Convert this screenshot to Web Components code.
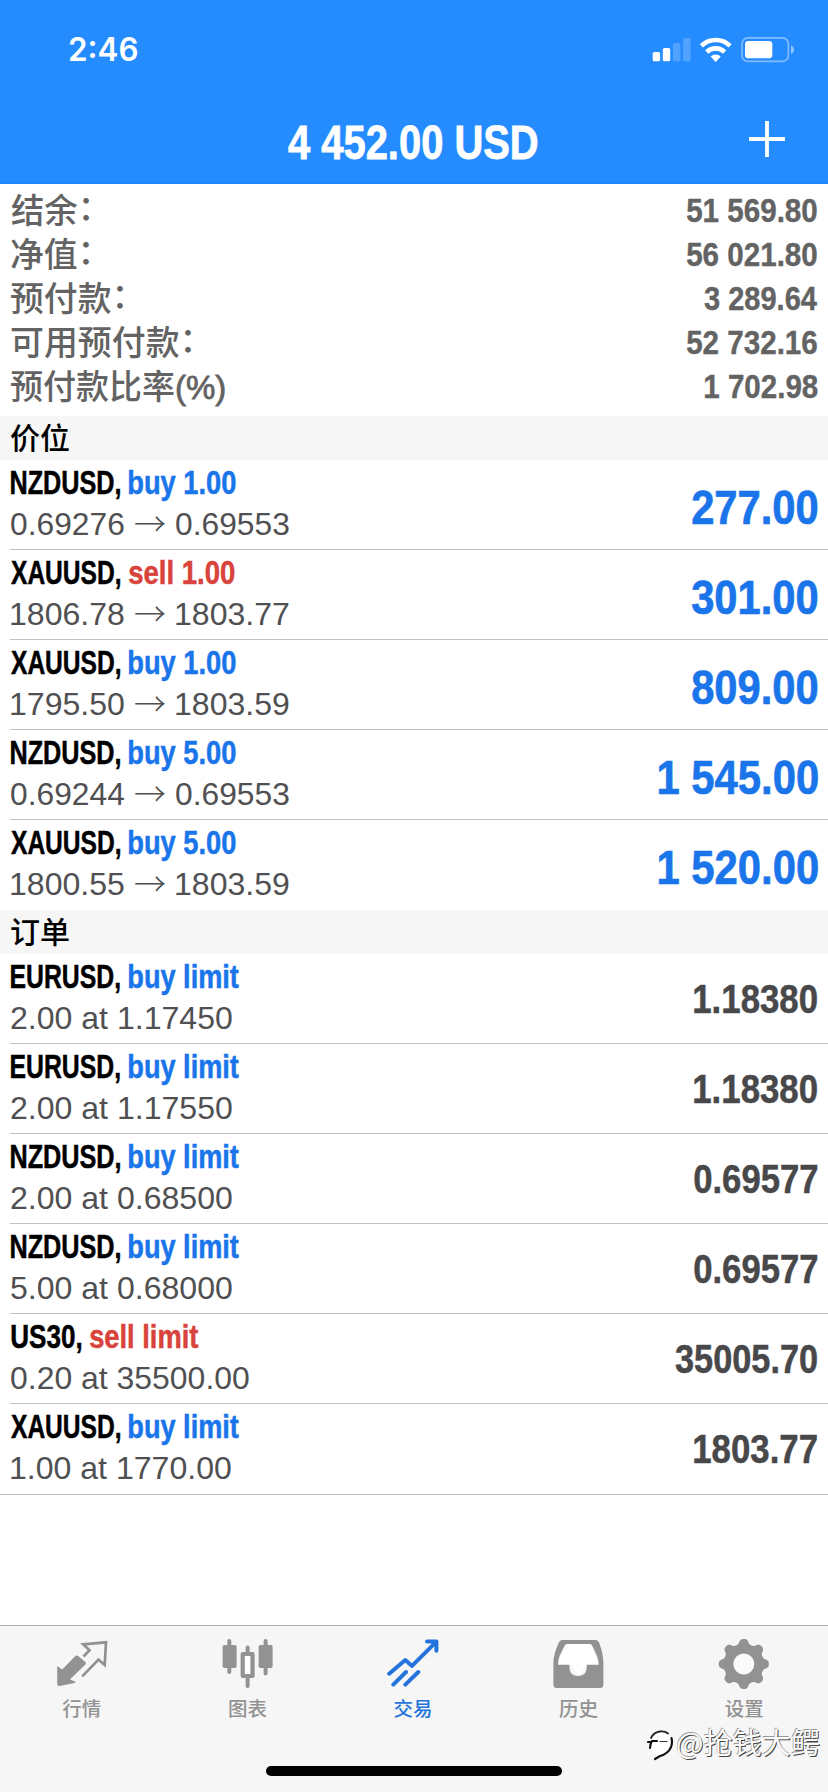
<!DOCTYPE html>
<html lang="zh-CN">
<head>
<meta charset="utf-8">
<title>交易</title>
<style>
html,body{margin:0;padding:0;background:#fff}
body{font-family:"Liberation Sans","Noto Sans CJK SC",sans-serif;color:#000}
</style>
</head>
<body>
<trade-app></trade-app>
<script>
const ctx = document.createElement('canvas').getContext('2d');

class Base extends HTMLElement {
  constructor() { super(); this.attachShadow({mode: 'open'}); }
  a(n) { return this.getAttribute(n) || ''; }
  connectedCallback() { this.shadowRoot.innerHTML = this.render(); this.ready(); }
  ready() {}
}

/* Condensed text: scales its glyphs horizontally so that their ink is exactly `w` pixels wide. */
customElements.define('fit-text', class extends Base {
  render() {
    const t = this.a('t').replace('：', '<i>：</i>').replace('(%)', '<b>(%)</b>');
    return `<style>:host{display:block;flex:none;white-space:pre}
      span{display:inline-block;transform-origin:0 50%}
      i{font-style:normal;line-height:0;vertical-align:3.5px}
      b{font-weight:inherit;-webkit-text-stroke:.8px}</style><span>${t}</span>`;
  }
  ready() {
    const cs = getComputedStyle(this), s = this.shadowRoot.querySelector('span'), w = +this.a('w');
    ctx.font = `${cs.fontWeight} ${cs.fontSize} ${cs.fontFamily}`;
    const m = ctx.measureText(this.a('t'));
    const l = m.actualBoundingBoxLeft, k = w / (l + m.actualBoundingBoxRight);
    this.style.width = w + 'px';
    s.style.transform = `translateX(${l * k}px) scaleX(${k})`;
  }
});

customElements.define('status-bar', class extends Base {
  render() {
    return `<style>
      :host{display:flex;align-items:flex-start;justify-content:space-between;height:64px;padding:34px 34px 0 69px;color:#fff}
      fit-text{font:600 32px/32px Inter,sans-serif}
      svg{display:block;margin-top:2px}</style>
      <fit-text t="2:46" w="68"></fit-text>
      <svg width="142" height="28" viewBox="652 36 142 28" fill="#fff">
        <rect x="652.7" y="52" width="7.4" height="9.3" rx="1.6"/><rect x="662.8" y="48" width="7.4" height="13.3" rx="1.6"/>
        <g opacity=".2"><rect x="673" y="43" width="7.4" height="18.3" rx="1.6"/><rect x="683.1" y="38" width="7.4" height="23.3" rx="1.6"/></g>
        <g fill="none" stroke="#fff" stroke-width="4.6"><path d="M701.3 45.8a20.8 20.8 0 0 1 28.8 0"/><path d="M706.7 52a13 13 0 0 1 18 0"/></g>
        <path d="M710.6 56.6a7.4 7.4 0 0 1 10.2 0l-5.1 5.3z"/>
        <rect x="742" y="37.8" width="46.4" height="23.6" rx="6" fill="none" stroke="#fff" stroke-width="1.7" opacity=".42"/>
        <rect x="745" y="41" width="27.3" height="17.3" rx="3.4"/>
        <path d="M791 45.5q3.2 1.2 3.2 4.2t-3.2 4.2z" opacity=".48"/>
      </svg>`;
  }
});

customElements.define('nav-bar', class extends Base {
  render() {
    return `<style>
      :host{display:grid;grid-template-columns:1fr auto 1fr;align-items:center;height:90px;padding:0 43px 0 40px;color:#fff;font-weight:700;font-size:48.5px;line-height:54px}
      fit-text{-webkit-text-stroke:.8px;margin-top:3px}
      svg{justify-self:end;margin-top:-2px}</style>
      <i></i><fit-text t="4 452.00 USD" w="249"></fit-text>
      <svg width="36" height="36" viewBox="0 0 36 36" stroke="#fff" stroke-width="3.8"><path d="M18 0v36M0 18h36"/></svg>`;
  }
});

customElements.define('summary-row', class extends Base {
  render() {
    return `<style>
      :host{display:flex;justify-content:space-between;align-items:center;height:44px;padding:0 11px;color:#636363}
      .l{font-weight:500;font-size:34px;line-height:40px;white-space:nowrap;margin-top:1px}
      .v{font-weight:700;font-size:34px;line-height:40px;-webkit-text-stroke:.4px}</style>
      <fit-text class="l" t="${this.a('label')}" w="${this.a('lw')}"></fit-text>
      <fit-text class="v" t="${this.a('value')}" w="${this.a('vw')}"></fit-text>`;
  }
});

customElements.define('section-head', class extends Base {
  render() {
    return `<style>:host{display:block;height:44px;padding-left:10px;background:#f6f6f6;color:#000;font:500 30px/41px "Noto Sans CJK SC",sans-serif}</style><slot></slot>`;
  }
});

customElements.define('deal-row', class extends Base {
  render() {
    const order = this.hasAttribute('order');
    const [a, b] = this.a('detail').split('|');
    const detail = b
      ? `<fit-text t="${a}" w="113"></fit-text><b>→</b><fit-text t="${b}" w="113"></fit-text>`
      : `<fit-text t="${a}" w="${this.a('dw')}"></fit-text>`;
    return `<style>
      :host{display:flex;flex-direction:column;height:90px;--side:#1a75ea}
      :host([last]){height:91px}
      :host([sell]){--side:#d8433b}
      .row{flex:1;display:flex;justify-content:space-between;align-items:center;padding:0 11px}
      .txt{margin-top:-2px}
      .top{display:flex;gap:9px;font-weight:700;font-size:32.5px;line-height:41px;color:#000;-webkit-text-stroke:.5px}
      .side{color:var(--side)}
      .det{display:flex;font-size:32px;line-height:41px;color:#505052}
      .det b{width:52px;text-align:center;font:300 32px/37px "Noto Sans CJK SC",sans-serif}
      .v{font-weight:700;font-size:48.5px;line-height:54px;color:#1a75ea;margin-top:4px;-webkit-text-stroke:.7px}
      .v.o{font-size:40px;color:#48484a;margin-top:0;-webkit-text-stroke:.5px}
      hr{flex:none;height:1px;margin:0 0 0 10px;border:0;background:#c2c2c4}
      :host([end]) hr{background:transparent}
      :host([last]) hr{margin:0}</style>
      <div class="row"><div class="txt">
        <div class="top"><fit-text t="${this.a('sym')}," w="${this.a('sw')}"></fit-text><fit-text class="side" t="${this.a('side')}" w="${this.a('tw')}"></fit-text></div>
        <div class="det">${detail}</div></div>
        <fit-text class="v ${order ? 'o' : ''}" t="${this.a('value')}" w="${this.a('vw')}"></fit-text></div><hr>`;
  }
});

function gearPath(cx, cy) {
  let d = '';
  for (let i = 0; i < 240; i++) {
    const t = i / 240 * Math.PI * 2, r = 22.6 + 2.5 * Math.tanh(1.5 * Math.cos(8 * t)) / Math.tanh(1.5);
    d += (i ? 'L' : 'M') + (cx + r * Math.cos(t)).toFixed(2) + ' ' + (cy + r * Math.sin(t)).toFixed(2);
  }
  return d + 'Z';
}
const ICONS = {
  quotes: `<path fill="currentColor" d="M1.2 30l5 3.4L19.4 20q1.4-1.2 2.8 0l7.2 6q1 1.2 0 2.4L14 43.5l5.2 2.1q.8.9-.6 1.3L3.6 50q-2.4.2-2.4-2z"/>
    <path fill="none" stroke="currentColor" stroke-width="2.7" d="M26.2 40.4L42.5 23.5l6.2 5.4 1.3-22.6-22.8 2 6.3 6-6 6.2"/>`,
  charts: `<g stroke="currentColor" stroke-width="4" stroke-linecap="round"><path d="M8.3 5v31M44.6 5v32.5M26.6 11.5V18M26.6 41v9"/></g>
    <rect x="1.6" y="9" width="14" height="23" rx="1.8" fill="currentColor"/><rect x="37.6" y="9" width="14" height="23" rx="1.8" fill="currentColor"/>
    <rect x="21.7" y="18" width="9.8" height="22" fill="#fff" stroke="currentColor" stroke-width="4.2" stroke-linejoin="round"/>`,
  trade: `<path fill="none" stroke="currentColor" stroke-width="4" stroke-linecap="round" stroke-linejoin="round" d="M2.2 37.7L18.3 24l6.7 5.9L49.4 5.6M40 5.6h9.4v9.2M19 36L6.3 48.6M31.3 36L18.3 48.6"/>`,
  history: `<path fill="#fff" d="M13 7h25l8 22H34l-8 11-9-11H5z"/><path fill="currentColor" fill-rule="evenodd" d="M9.5 4h33q3.2 0 4.3 4.5Q50.4 19 50.4 27v21.5q0 3.5-3.5 3.5h-43Q.4 52 .4 48.500V27Q.4 19 5 8.500 6.300 4 9.500 4zM14 8q-2 0-2.800 2.500L6.500 20q-1.500 4-1.500 8.700h11.400V32q.6 8 8.600 8t8.700-8v-3.300h12q0-4.700-1.700-8.700L39.600 10.500Q39 8 37 8z"/>`,
  settings: `<circle cx="25.8" cy="28" r="12" fill="#fafafa"/><path fill="currentColor" fill-rule="evenodd" d="${gearPath(25.8, 28)}M36.3 28a10.500 10.500 0 1 0-21 0 10.500 10.500 0 1 0 21 0z"/>`
};
customElements.define('tab-item', class extends Base {
  render() {
    return `<style>
      :host{flex:1;display:flex;flex-direction:column;align-items:center;padding-top:10px;color:#929292}
      :host([active]){color:#2474dc}
      svg{display:block}
      span{font:500 19.5px/28px "Noto Sans CJK SC",sans-serif;margin:4px 0 0 -2px}</style>
      <svg width="54" height="54" viewBox="0 0 54 54">${ICONS[this.a('icon')]}</svg><span><slot></slot></span>`;
  }
});

customElements.define('tab-bar', class extends Base {
  render() {
    return `<style>
      :host{display:flex;flex-direction:column;justify-content:space-between;align-items:center;height:167px;box-sizing:border-box;border-top:1px solid #b0b0b0;background:#f6f6f6}
      nav{display:flex;width:100%}
      i{width:296px;height:10px;border-radius:5px;background:#000;margin-bottom:16px}</style>
      <nav><slot></slot></nav><i></i>`;
  }
});

customElements.define('water-mark', class extends Base {
  render() {
    return `<style>
      :host{position:absolute;left:646px;top:1723px;display:flex;align-items:center;height:36px;gap:3px;color:#fcfcfc}
      fit-text{font:400 29px/36px "Noto Sans CJK SC",sans-serif;text-shadow:1px 1px 0 #444,-.6px -.6px 0 #999}
      svg{display:block;margin-top:6px}</style>
      <svg width="28" height="34" viewBox="0 0 28 34" fill="none" stroke-linecap="round">
        <circle cx="14" cy="16" r="12" fill="#fff"/>
        <path stroke="#222" stroke-width="1.8" d="M5 11Q8 5 14 4.500q5-.5 8 2"/><path stroke="#111" stroke-width="2.200" d="M4 21q0-4 2-7h5M2 15h3M25.500 11q2 9-4.500 14.500-3 2.500-7 3.500l-5 3"/><path stroke="#333" stroke-width="1.2" d="M14 14.500h7"/>
      </svg>
      <fit-text t="@抢钱大鳄" w="142"></fit-text>`;
  }
});

customElements.define('trade-app', class extends Base {
  render() {
    const sum = [['结余：', 78.5, '51 569.80', 130], ['净值：', 78.5, '56 021.80', 130], ['预付款：', 112.5, '3 289.64', 113], ['可用预付款：', 180.5, '52 732.16', 130], ['预付款比率(%)', 214, '1 702.98', 112.5]]
      .map(([l, lw, v, vw]) => `<summary-row label="${l}" lw="${lw}" value="${v}" vw="${vw}"></summary-row>`).join('');
    const pos = [['NZDUSD', 109, 'buy 1.00', 106.5, '0.69276|0.69553', '277.00', 125], ['XAUUSD', 109, 'sell 1.00', 105.5, '1806.78|1803.77', '301.00', 125],
      ['XAUUSD', 109, 'buy 1.00', 106.5, '1795.50|1803.59', '809.00', 125], ['NZDUSD', 109, 'buy 5.00', 106.5, '0.69244|0.69553', '1 545.00', 158.5],
      ['XAUUSD', 109, 'buy 5.00', 106.5, '1800.55|1803.59', '1 520.00', 158.5]]
      .map(([s, sw, d, tw, t, v, vw], i) => `<deal-row sym="${s}" sw="${sw}" side="${d}" tw="${tw}" detail="${t}" value="${v}" vw="${vw}" ${d[0] === 's' ? 'sell' : ''} ${i === 4 ? 'end' : ''}></deal-row>`).join('');
    const ord = [['EURUSD', 108.5, 'buy limit', 110, '2.00 at 1.17450', 221, '1.18380', 123], ['EURUSD', 108.5, 'buy limit', 110, '2.00 at 1.17550', 221, '1.18380', 123],
      ['NZDUSD', 109, 'buy limit', 110, '2.00 at 0.68500', 221, '0.69577', 123.5], ['NZDUSD', 109, 'buy limit', 110, '5.00 at 0.68000', 221, '0.69577', 123.5],
      ['US30', 70, 'sell limit', 108.5, '0.20 at 35500.00', 238, '35005.70', 142], ['XAUUSD', 109, 'buy limit', 110, '1.00 at 1770.00', 220, '1803.77', 123]]
      .map(([s, sw, d, tw, t, dw, v, vw], i) => `<deal-row order sym="${s}" sw="${sw}" side="${d}" tw="${tw}" detail="${t}" dw="${dw}" value="${v}" vw="${vw}" ${d[0] === 's' ? 'sell' : ''} ${i === 5 ? 'last' : ''}></deal-row>`).join('');
    return `<style>
      :host{display:flex;flex-direction:column;width:828px;height:1792px;position:relative;background:#fff;overflow:hidden}
      header{flex:none;display:flex;flex-direction:column;height:184px;box-sizing:border-box;background:#258cff;border-bottom:2px solid #1f85fb}
      main{flex:1;display:flex;flex-direction:column}
      .sum{padding:4px 0 8px}
      status-bar{box-sizing:border-box}
      nav-bar{box-sizing:border-box;margin-top:34px}</style>
      <header><status-bar></status-bar><nav-bar></nav-bar></header>
      <main><div class="sum">${sum}</div><section-head>价位</section-head>${pos}<section-head>订单</section-head>${ord}</main>
      <tab-bar><tab-item icon="quotes">行情</tab-item><tab-item icon="charts">图表</tab-item><tab-item icon="trade" active>交易</tab-item><tab-item icon="history">历史</tab-item><tab-item icon="settings">设置</tab-item></tab-bar>
      <water-mark></water-mark>`;
  }
});
</script>
</body>
</html>
